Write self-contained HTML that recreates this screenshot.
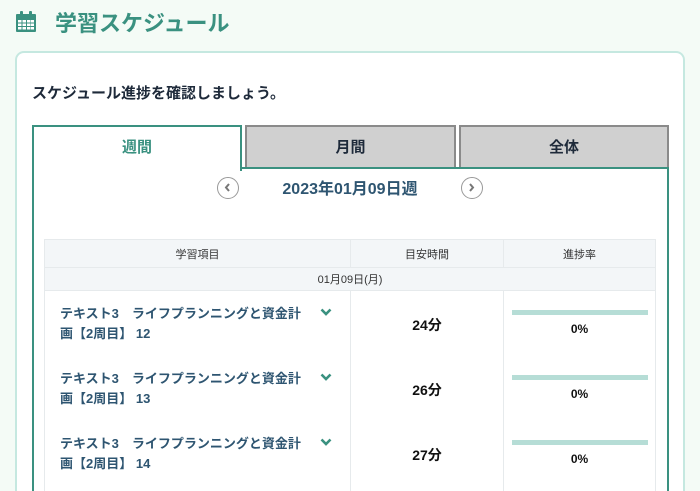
<!DOCTYPE html><html><head><meta charset="utf-8"><style>
*{margin:0;padding:0;box-sizing:border-box}
html,body{width:700px;height:491px;overflow:hidden}
body{background:#f4fbf6;font-family:"Liberation Sans","Noto Sans CJK JP",sans-serif;position:relative}
.abs{position:absolute}
.title{left:55px;top:6px;font-size:22px;font-weight:bold;color:#3a9180;}
.card{left:15px;top:51px;width:670px;height:440px;background:#fff;border:2px solid #c5e8e0;border-bottom:none;border-radius:9px 9px 0 0}
.lead{left:32px;top:82px;font-size:15px;font-weight:bold;color:#1e2a3a}
.tab{top:125px;height:44px;font-size:15px;font-weight:bold;text-align:center;line-height:42px}
.t1{left:32px;width:210px;background:#fff;border:2px solid #3a9180;border-bottom:none;color:#3a9180;height:46px}
.t2,.t3{background:#d0d0d0;border:2px solid #8a8a8a;border-bottom:none;color:#1e2a3a;height:42px}
.t2{left:245px;width:211px}.t3{left:459px;width:210px}
.panel{left:32px;top:167px;width:637px;height:324px;border:2px solid #3a9180;border-top:none;border-bottom:none}
.pline{left:241px;top:167px;width:428px;height:2px;background:#3a9180}
.circ{top:177px;width:22px;height:22px;border:1.5px solid #999;border-radius:50%;background:#fff}
.date{left:250px;top:175px;width:200px;text-align:center;font-size:16px;font-weight:bold;color:#2e5571}
.tw{left:44px;top:239px;width:612px;height:252px;overflow:hidden}
table{width:612px;border-collapse:collapse;font-size:11px;color:#333}
td{border-left:1px solid #e6eaec;border-right:1px solid #e6eaec}
.h td{background:#f3f6f8;height:28px;text-align:center;border:1px solid #e6eaec}
.d td{background:#f3f6f8;height:23px;text-align:center;border:1px solid #e6eaec}
.r td{height:65px;vertical-align:top}
.nm{padding:13px 0 0 15px;font-size:13px;font-weight:bold;color:#2e5571;line-height:20px;position:relative}
.chev{position:absolute;right:18px;top:17px}
.tm{text-align:center;font-size:14px;font-weight:bold;color:#111;padding-top:24px}
.bar{margin:19px 7px 0 8px;height:5px;background:#b6ddd6}
.pc{text-align:center;font-size:12px;font-weight:bold;color:#111;margin-top:7px}
</style></head><body>
<svg class="abs" style="left:15px;top:11px" width="22" height="22" viewBox="0 0 22 22"><rect x="1" y="3" width="20" height="18" rx="1" fill="#3a9180"/><rect x="5" y="0" width="3" height="6" rx="1" fill="#3a9180"/><rect x="14" y="0" width="3" height="6" rx="1" fill="#3a9180"/><g fill="#fff"><rect x="3" y="9" width="3.5" height="2.5"/><rect x="7.5" y="9" width="3.5" height="2.5"/><rect x="12" y="9" width="3.5" height="2.5"/><rect x="16" y="9" width="3" height="2.5"/><rect x="3" y="12.5" width="3.5" height="2.5"/><rect x="7.5" y="12.5" width="3.5" height="2.5"/><rect x="12" y="12.5" width="3.5" height="2.5"/><rect x="16" y="12.5" width="3" height="2.5"/><rect x="3" y="16" width="3.5" height="2.5"/><rect x="7.5" y="16" width="3.5" height="2.5"/><rect x="12" y="16" width="3.5" height="2.5"/><rect x="16" y="16" width="3" height="2.5"/></g></svg>
<div class="abs title">学習スケジュール</div>
<div class="abs card"></div>
<div class="abs lead">スケジュール進捗を確認しましょう。</div>
<div class="abs panel"></div>
<div class="abs pline"></div>
<div class="abs tab t1">週間</div>
<div class="abs tab t2">月間</div>
<div class="abs tab t3">全体</div>
<div class="abs circ" style="left:217px"><svg width="19" height="19" viewBox="0 0 19 19"><path d="M11 6 L8 9.5 L11 13" stroke="#777" stroke-width="2" fill="none"/></svg></div>
<div class="abs date">2023年01月09日週</div>
<div class="abs circ" style="left:461px"><svg width="19" height="19" viewBox="0 0 19 19"><path d="M8 6 L11 9.5 L8 13" stroke="#777" stroke-width="2" fill="none"/></svg></div>
<div class="abs tw"><table>
<tr class="h"><td style="width:306px">学習項目</td><td style="width:153px">目安時間</td><td>進捗率</td></tr>
<tr class="d"><td colspan="3">01月09日(月)</td></tr>
<tr class="r"><td class="nm">テキスト3　ライフプランニングと資金計<br>画【2周目】 12<svg class="chev" width="12" height="8" viewBox="0 0 12 8"><path d="M1.5 1.5 L6 6 L10.5 1.5" stroke="#3a9180" stroke-width="2.6" fill="none"/></svg></td><td class="tm">24分</td><td><div class="bar"></div><div class="pc">0%</div></td></tr>
<tr class="r"><td class="nm">テキスト3　ライフプランニングと資金計<br>画【2周目】 13<svg class="chev" width="12" height="8" viewBox="0 0 12 8"><path d="M1.5 1.5 L6 6 L10.5 1.5" stroke="#3a9180" stroke-width="2.6" fill="none"/></svg></td><td class="tm">26分</td><td><div class="bar"></div><div class="pc">0%</div></td></tr>
<tr class="r"><td class="nm">テキスト3　ライフプランニングと資金計<br>画【2周目】 14<svg class="chev" width="12" height="8" viewBox="0 0 12 8"><path d="M1.5 1.5 L6 6 L10.5 1.5" stroke="#3a9180" stroke-width="2.6" fill="none"/></svg></td><td class="tm">27分</td><td><div class="bar"></div><div class="pc">0%</div></td></tr>
<tr class="r"><td class="nm"></td><td class="tm"></td><td></td></tr>
</table></div>
</body></html>
